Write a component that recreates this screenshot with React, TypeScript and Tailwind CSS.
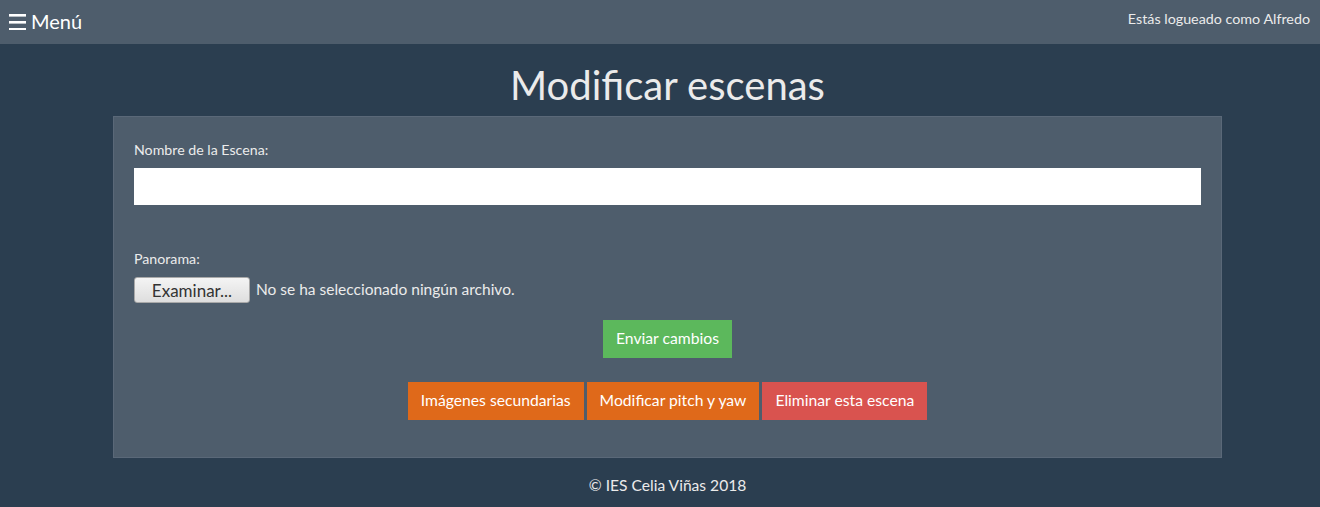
import React from "react";

function App() {
  return (
    <div className="min-h-[507px] bg-[#2b3e50] font-['Lato','Liberation_Sans',sans-serif] text-[#ebebeb]">
      {/* Navbar */}
      <nav className="h-[44px] bg-[#4e5d6c] flex items-center justify-between pl-[9px] pr-[10px]">
        <div className="flex items-center gap-[5px] text-[20px] text-white mt-[-3px]">
          <svg width="17" height="17" viewBox="0 0 17 17" className="mt-[1px]">
            <rect x="0" y="1" width="17" height="2.6" fill="#fff" />
            <rect x="0" y="8" width="17" height="2.6" fill="#fff" />
            <rect x="0" y="15" width="17" height="2.6" fill="#fff" />
          </svg>
          <span>Menú</span>
        </div>
        <span className="text-[14.3px] mt-[-6px]">Estás logueado como Alfredo</span>
      </nav>

      {/* Title */}
      <h1 className="text-center text-[40px] leading-[44px] pt-[19px] pb-[9px] ml-[15px]">Modificar escenas</h1>

      {/* Panel */}
      <div className="ml-[113px] w-[1109px] bg-[#4e5d6c] border border-[#5a6878] px-[20px] pt-[23px] pb-[37px]">
        <label className="block text-[14.2px] leading-[20px] mb-[8px]">Nombre de la Escena:</label>
        <input type="text" className="block w-[1067px] h-[37px] bg-white border-0 outline-none" />

        <label className="block text-[14.2px] leading-[20px] mt-[44px] mb-[8px]">Panorama:</label>
        <div className="flex items-center gap-[6px] text-[15.5px]">
          <button className="h-[26px] w-[116px] rounded-[3px] border border-[#a9a9a9] bg-gradient-to-b from-[#f4f4f4] to-[#dedede] text-[#333] text-[17px] leading-none">
            Examinar...
          </button>
          <span>No se ha seleccionado ningún archivo.</span>
        </div>

        <div className="flex justify-center mt-[17px]">
          <button className="h-[38px] px-[13px] bg-[#5cb85c] text-white text-[15.7px]">Enviar cambios</button>
        </div>

        <div className="flex justify-center gap-[3px] mt-[24px]">
          <button className="h-[38px] px-[13px] bg-[#df691a] text-white text-[15.7px]">Imágenes secundarias</button>
          <button className="h-[38px] px-[13px] bg-[#df691a] text-white text-[15.7px]">Modificar pitch y yaw</button>
          <button className="h-[38px] px-[13px] bg-[#d9534f] text-white text-[15.7px]">Eliminar esta escena</button>
        </div>
      </div>

      {/* Footer */}
      <footer className="text-center text-[15.6px] leading-[24px] pt-[15px] ml-[15px]">© IES Celia Viñas 2018</footer>
    </div>
  );
}

export default App;
